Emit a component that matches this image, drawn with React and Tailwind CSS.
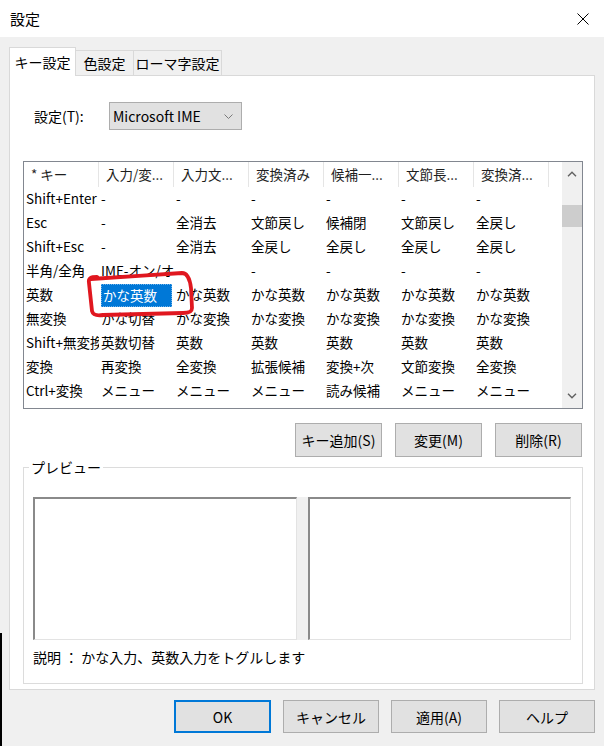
import React from "react";

const headers = ["* キー", "入力/変...", "入力文...", "変換済み", "候補一...", "文節長...", "変換済..."];

const rows = [
  ["Shift+Enter", "-", "-", "-", "-", "-", "-"],
  ["Esc", "-", "全消去", "文節戻し", "候補閉", "文節戻し", "全戻し"],
  ["Shift+Esc", "-", "全消去", "全戻し", "全戻し", "全戻し", "全戻し"],
  ["半角/全角", "IME-オン/オフ", "-", "-", "-", "-", "-"],
  ["英数", "かな英数", "かな英数", "かな英数", "かな英数", "かな英数", "かな英数"],
  ["無変換", "かな切替", "かな変換", "かな変換", "かな変換", "かな変換", "かな変換"],
  ["Shift+無変換", "英数切替", "英数", "英数", "英数", "英数", "英数"],
  ["変換", "再変換", "全変換", "拡張候補", "変換+次", "文節変換", "全変換"],
  ["Ctrl+変換", "メニュー", "メニュー", "メニュー", "読み候補", "メニュー", "メニュー"],
];

function Chevron({ up }) {
  return (
    <svg width="10" height="6" viewBox="0 0 10 6">
      <path
        d={up ? "M1 5.2 L5 1.2 L9 5.2" : "M1 0.8 L5 4.8 L9 0.8"}
        stroke="#606060"
        strokeWidth="1.4"
        fill="none"
      />
    </svg>
  );
}

function Button({ children, width = "w-[96px]", height = "h-[33px]", primary }) {
  return (
    <div
      className={`${width} ${height} flex items-center justify-center bg-[#e1e1e1] ${
        primary ? "border-2 border-[#0078d7]" : "border border-[#adadad]"
      }`}
    >
      {children}
    </div>
  );
}

export default function App() {
  return (
    <div className="relative w-[604px] h-[746px] bg-[#f0f0f0] overflow-hidden text-[14px] leading-none text-black font-['Noto_Sans_CJK_JP','Noto_Sans',sans-serif]">
      {/* Title bar */}
      <div className="h-[37px] bg-white flex items-center justify-between pl-[10px] pr-[15px]">
        <span className="text-[15px]">設定</span>
        <svg width="12" height="12" viewBox="0 0 12 12">
          <path d="M0.5 0.5 L11.5 11.5 M11.5 0.5 L0.5 11.5" stroke="#000" strokeWidth="1" />
        </svg>
      </div>

      <div className="px-[9px] pt-[10px]">
        {/* Tabs */}
        <div className="relative z-10 flex items-end h-[29px]">
          <div className="w-[67px] h-[29px] bg-white border border-b-0 border-[#d9d9d9] flex items-center justify-center">
            キー設定
          </div>
          <div className="w-[58px] h-[25px] mb-px bg-[#f0f0f0] border-t border-r border-[#d9d9d9] flex items-center justify-center">
            色設定
          </div>
          <div className="w-[88px] h-[25px] mb-px bg-[#f0f0f0] border-t border-r border-[#d9d9d9] flex items-center justify-center">
            ローマ字設定
          </div>
        </div>

        {/* Tab panel */}
        <div className="-mt-px w-[586px] h-[615px] bg-white border border-[#d9d9d9]">
          <div className="mt-[26px] flex items-center pl-[24px]">
            <span className="w-[75px]">設定(T):</span>
            <div className="w-[133px] h-[28px] bg-[#e1e1e1] border border-[#adadad] flex items-center justify-between pl-[3px] pr-[8px]">
              <span>Microsoft IME</span>
              <svg width="9" height="5" viewBox="0 0 9 5">
                <path d="M0.5 0.5 L4.5 4.5 L8.5 0.5" stroke="#7a7a7a" strokeWidth="1" fill="none" />
              </svg>
            </div>
          </div>

          {/* List view */}
          <div className="relative mt-[31px] ml-[13px] w-[560px] h-[248px] border border-[#828790] flex text-[13.5px]">
            <div className="w-[525px] overflow-hidden">
              <div className="flex h-[25px]">
                {headers.map((h) => (
                  <div
                    key={h}
                    className="w-[75px] shrink-0 border-r border-[#e5e5e5] flex items-center pl-[7px] text-[#1e1e1e] whitespace-nowrap overflow-hidden"
                  >
                    {h}
                  </div>
                ))}
              </div>
              {rows.map((row, ri) => (
                <div key={ri} className="flex h-[24px]">
                  {row.map((cell, ci) =>
                    ri === 4 && ci === 1 ? (
                      <div key={ci} className="w-[75px] shrink-0 px-[2px] pt-px">
                        <div className="h-[23px] bg-[#0078d7] text-white flex items-center pl-px border border-dotted border-[#6fb2ea]">
                          {cell}
                        </div>
                      </div>
                    ) : (
                      <div
                        key={ci}
                        className="w-[75px] shrink-0 flex items-center pl-[2px] whitespace-nowrap overflow-hidden"
                      >
                        {cell}
                      </div>
                    )
                  )}
                </div>
              ))}
            </div>
            <div className="w-[13px]" />
            {/* Scrollbar */}
            <div className="w-[20px] bg-[#f0f0f0] flex flex-col">
              <div className="h-[24px] flex items-center justify-center">
                <Chevron up />
              </div>
              <div className="h-[19px]" />
              <div className="h-[22px] bg-[#cdcdcd]" />
              <div className="flex-1" />
              <div className="h-[24px] flex items-center justify-center">
                <Chevron />
              </div>
            </div>

            {/* Red hand-drawn mark */}
            <svg
              className="absolute -left-px -top-px pointer-events-none overflow-visible"
              width="560"
              height="248"
              viewBox="0 0 560 248"
            >
              <path
                d="M68 118 C 95 116, 130 114, 159 112 C 165 112, 167 119, 168 127 L 169 147 C 169 151, 166 152, 160 152 L 80 154 C 73 155, 70 154, 69 150 L 66 122 C 65 117, 68 116, 74 116"
                stroke="#e0171f"
                strokeWidth="3.8"
                strokeLinecap="round"
                strokeLinejoin="round"
                fill="none"
              />
            </svg>
          </div>

          {/* Action buttons */}
          <div className="mt-[14px] flex justify-end gap-[13px] pr-[12px]">
            <Button width="w-[87px]" height="h-[34px]">キー追加(S)</Button>
            <Button width="w-[87px]" height="h-[34px]">変更(M)</Button>
            <Button width="w-[87px]" height="h-[34px]">削除(R)</Button>
          </div>

          {/* Preview group */}
          <fieldset className="ml-[13px] w-[560px] border border-[#dcdcdc]">
            <legend className="ml-[5px] px-[2px] leading-[20px]">プレビュー</legend>
            <div className="pt-[20px] pl-[9px] flex">
              <div className="w-[264px] h-[143px] bg-white border-t-2 border-l-2 border-t-[#8a8a8a] border-l-[#8a8a8a] border-r border-b border-r-[#e3e3e3] border-b-[#e3e3e3]" />
              <div className="w-[11px] h-[143px] bg-[#f0f0f0]" />
              <div className="w-[263px] h-[143px] bg-white border-t-2 border-l-2 border-t-[#8a8a8a] border-l-[#8a8a8a] border-r border-b border-r-[#e3e3e3] border-b-[#e3e3e3]" />
            </div>
            <div className="mt-[7px] pl-[9px] pb-[16px] leading-[20px]">
              説明 ： かな入力、英数入力をトグルします
            </div>
          </fieldset>
        </div>

        {/* Dialog buttons */}
        <div className="mt-[10px] flex justify-end gap-[12px]">
          <Button width="w-[97px]" primary>OK</Button>
          <Button>キャンセル</Button>
          <Button>適用(A)</Button>
          <Button>ヘルプ</Button>
        </div>
      </div>

      {/* window edge behind the dialog */}
      <div className="absolute left-0 top-[633px] bottom-0 w-[2px] bg-black" />
    </div>
  );
}
